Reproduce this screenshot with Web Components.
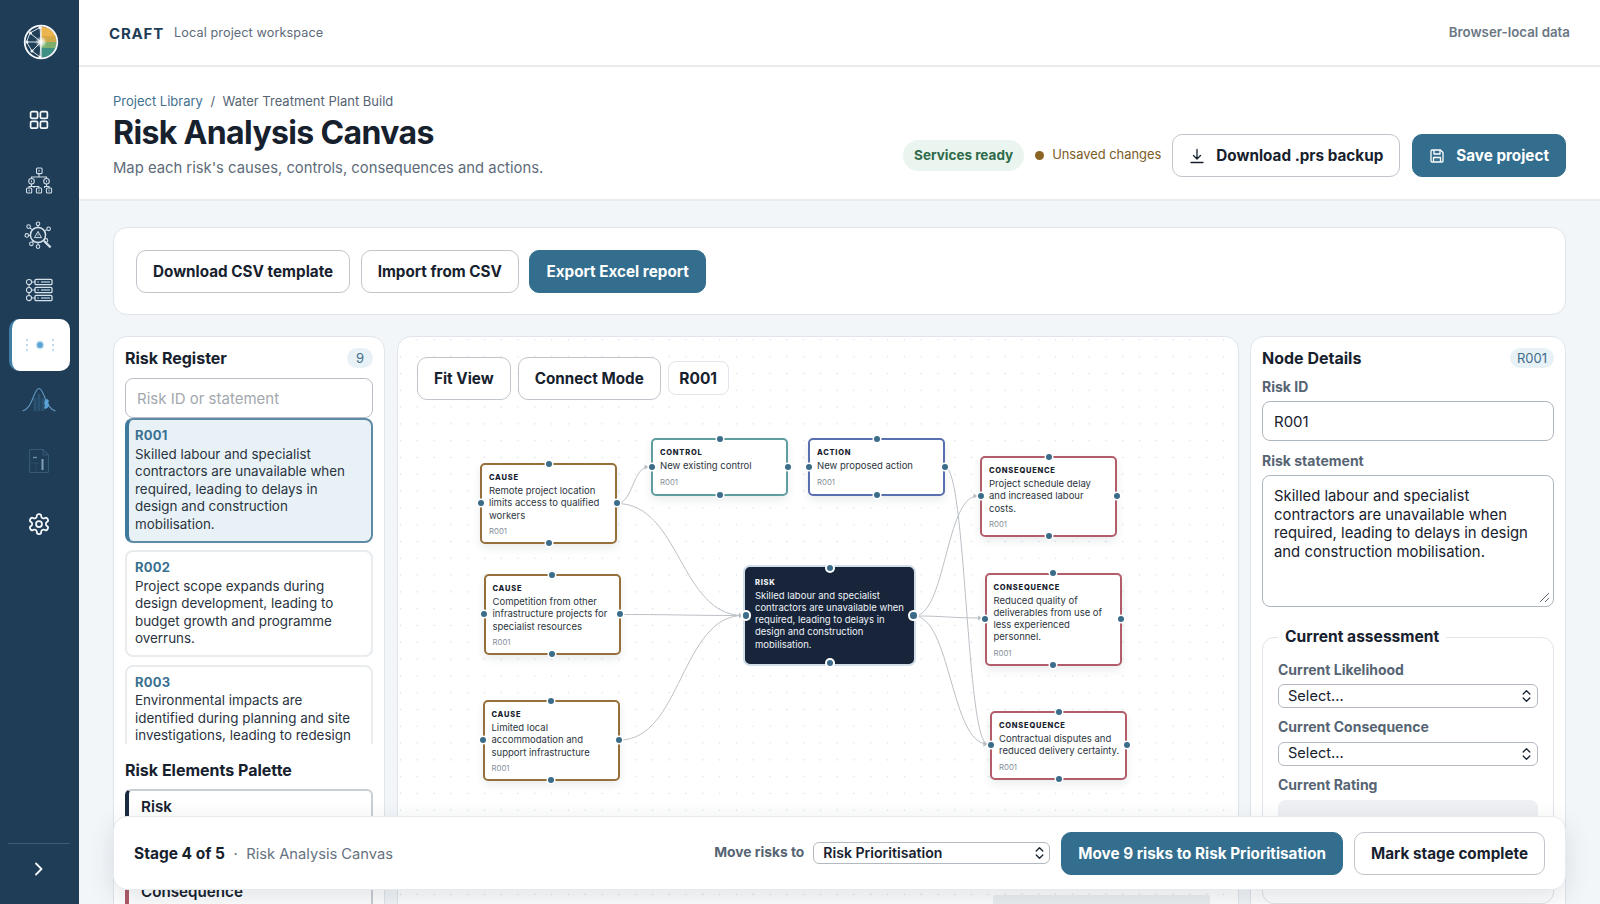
<!DOCTYPE html>
<html lang="en">
<head>
<meta charset="utf-8">
<title>Risk Analysis Canvas</title>
<style>
html,body{margin:0;padding:0;height:100%;overflow:hidden;background:#f3f6f9;font-family:Inter,"Liberation Sans",sans-serif;color:#17212e}
</style>
</head>
<body>
<app-shell>
  <side-nav slot="side">
    <nav-item mt="26">
      <svg width="20" height="20" viewBox="0 0 20 20" fill="none" stroke="#f4f8fb" stroke-width="1.7"><rect x="1.6" y="1.6" width="7" height="6.8" rx="1.4"/><rect x="11.4" y="1.6" width="7" height="6.8" rx="1.4"/><rect x="1.6" y="11.4" width="7" height="6.8" rx="1.4"/><rect x="11.4" y="11.4" width="7" height="6.8" rx="1.4"/></svg>
    </nav-item>
    <nav-item mt="9">
      <svg width="28" height="28" viewBox="0 0 28 28" fill="none" stroke="#d5e1ea" stroke-width="1.05"><rect x="11.5" y="1" width="5.6" height="5.6" rx="1"/><path d="M14 6.6V10M6.5 11.5V10H21.5V11.5M6.5 17v2.5M4 21v-1.5H9V21M14 19.5V21M9 19.5h5M21.5 17v2.5M19.5 21v-1.5H24V21"/><circle cx="6.5" cy="14.3" r="2.8"/><circle cx="21.5" cy="14.3" r="2.8"/><rect x="1.5" y="21" width="5.2" height="5" rx="1"/><rect x="11.4" y="21" width="5.2" height="5" rx="1"/><rect x="21.4" y="21" width="5.2" height="5" rx="1"/><path d="M14 2.7v2.2M6.5 13.3v2M21.5 13.3v2M4.1 22.5v2M14 22.5v2M24 22.5v2" stroke-width=".9"/></svg>
    </nav-item>
    <nav-item mt="3">
      <svg width="30" height="30" viewBox="0 0 30 30" fill="none" stroke="#d5e1ea" stroke-width="1.05"><circle cx="14" cy="14" r="7.6" stroke-width="1.5"/><path d="M14 10.4l3.5 6.2h-7z" stroke-width="1"/><path d="M14 12.6v2M14 15.5v.4" stroke-width=".8"/><circle cx="14" cy="2.8" r="1.8"/><circle cx="24.6" cy="7.8" r="1.8"/><circle cx="4.6" cy="5.6" r="1.8"/><circle cx="2.8" cy="14.4" r="1.8"/><circle cx="7.4" cy="22.8" r="1.8"/><circle cx="14" cy="25.6" r="1.8"/><circle cx="22" cy="19.4" r="1.8"/><path d="M14 4.6v1.8M22.9 8.6l-2.4 1.3M6 6.8l2.4 2M4.6 14.4H6.4M8.6 21.2l.8-1.4M14 23.8v-2.2"/><path d="M20 20l6.6 6.4" stroke-width="2.2"/></svg>
    </nav-item>
    <nav-item mt="2">
      <svg width="28" height="24" viewBox="0 0 28 24" fill="none" stroke="#d5e1ea" stroke-width="1.05"><circle cx="4" cy="4" r="2.6"/><circle cx="4" cy="12" r="2.6"/><circle cx="4" cy="20" r="2.6"/><path d="M4 6.6v2.8M4 14.6v2.8M6.6 4H10M6.6 12H10M6.6 20H10"/><rect x="10" y="1.4" width="17" height="5.2" rx="1.2" stroke-width="1.3"/><rect x="10" y="9.4" width="17" height="5.2" rx="1.2" stroke-width="1.3"/><rect x="10" y="17.4" width="17" height="5.2" rx="1.2" stroke-width="1.3"/><path d="M16 4h9M16 12h9M16 20h9" stroke="#7f97aa" stroke-width="2.2"/><path d="M12.6 4h.9M12.6 12h.9M12.6 20h.9" stroke-width="1.6"/></svg>
    </nav-item>
    <nav-item mt="3" active>
      <svg width="30" height="16" viewBox="0 0 30 16" fill="#a9cde4"><circle cx="2" cy="3" r="1"/><circle cx="2" cy="8" r="1"/><circle cx="2" cy="13" r="1"/><circle cx="28" cy="3" r="1"/><circle cx="28" cy="8" r="1"/><circle cx="28" cy="13" r="1"/><circle cx="15" cy="8" r="4.4" fill="#cfe4f2"/><circle cx="15" cy="8" r="2.9" fill="#5aa5d6"/></svg>
    </nav-item>
    <nav-item mt="3">
      <svg width="36" height="28" viewBox="0 0 36 28" fill="none"><path d="M14 12v13M18 8v17M22 12v13" stroke="#2a5371" stroke-width="3"/><path d="M1.500 25c6 -2 8 -7 10.500 -13c2 -5 3.500 -9.500 6 -9.500s4 4.500 6 9.500c2.500 6 4.500 11 10.500 13" stroke="#6299c1" stroke-width="1.100"/><path d="M24 14c3-2 5 1 3 3 2 1 1 5-3 6-1-1-1-2 0-3-1-2-1-4 0-6z" fill="#5ba3d6"/></svg>
    </nav-item>
    <nav-item mt="9">
      <svg width="22" height="26" viewBox="0 0 22 26" fill="none" stroke="#365a76" stroke-width="1.1"><path d="M1.500 2.500a1 1 0 0 1 1-1H15l5.500 5.500V23.500a1 1 0 0 1-1 1h-17a1 1 0 0 1-1-1z"/><path d="M15 1.500V7h5.500"/><path d="M5 9.500h4" stroke="#6b8ea8" stroke-width="1.4"/><path d="M14.500 11v11" stroke="#7ea1ba" stroke-width="2"/><path d="M1.500 15h10M8 15v9" stroke="#2e4f69" stroke-width=".8"/></svg>
    </nav-item>
    <nav-item mt="11">
      <svg width="24" height="24" viewBox="0 0 24 24" fill="none" stroke="#f4f8fb" stroke-width="1.75" stroke-linecap="round" stroke-linejoin="round"><path d="M12.220 2h-.44a2 2 0 0 0-2 2v.18a2 2 0 0 1-1 1.730l-.43.25a2 2 0 0 1-2 0l-.15-.08a2 2 0 0 0-2.730.73l-.22.38a2 2 0 0 0 .73 2.730l.15.1a2 2 0 0 1 1 1.720v.51a2 2 0 0 1-1 1.740l-.15.09a2 2 0 0 0-.73 2.730l.22.38a2 2 0 0 0 2.730.73l.15-.08a2 2 0 0 1 2 0l.43.25a2 2 0 0 1 1 1.730V20a2 2 0 0 0 2 2h.44a2 2 0 0 0 2-2v-.18a2 2 0 0 1 1-1.730l.43-.25a2 2 0 0 1 2 0l.15.08a2 2 0 0 0 2.730-.73l.22-.39a2 2 0 0 0-.73-2.730l-.15-.08a2 2 0 0 1-1-1.740v-.5a2 2 0 0 1 1-1.740l.15-.09a2 2 0 0 0 .73-2.730l-.22-.38a2 2 0 0 0-2.730-.73l-.15.08a2 2 0 0 1-2 0l-.43-.25a2 2 0 0 1-1-1.730V4a2 2 0 0 0-2-2z"/><circle cx="12" cy="12" r="3"/></svg>
    </nav-item>
  </side-nav>

  <app-header></app-header>
  <page-head></page-head>

  <main-area>
    <tool-card>
      <c-btn>Download CSV template</c-btn>
      <c-btn>Import from CSV</c-btn>
      <c-btn primary>Export Excel report</c-btn>
    </tool-card>
    <work-grid>
      <register-panel>
        <risk-card rid="R001" active>Skilled labour and specialist contractors are unavailable when required, leading to delays in design and construction mobilisation.</risk-card>
        <risk-card rid="R002">Project scope expands during design development, leading to budget growth and programme overruns.</risk-card>
        <risk-card rid="R003" style="min-height:110px">Environmental impacts are identified during planning and site investigations, leading to redesign</risk-card>
        <palette-item slot="palette" color="#1a2a40">Risk</palette-item>
        <palette-item slot="palette" color="#96703a"></palette-item>
        <palette-item slot="palette" color="#b05a66">Consequence</palette-item>
      </register-panel>
      <canvas-panel>
        <c-btn slot="tools">Fit View</c-btn>
        <c-btn slot="tools">Connect Mode</c-btn>
        <id-chip slot="tools">R001</id-chip>
        <flow-edges></flow-edges>
        <flow-node kind="cause" x="480" y="463" w="137">Remote project location limits access to qualified workers</flow-node>
        <flow-node kind="control" x="651" y="438" w="137">New existing control</flow-node>
        <flow-node kind="action" x="808" y="438" w="137">New proposed action</flow-node>
        <flow-node kind="cause" x="483.5" y="574" w="137">Competition from other infrastructure projects for specialist resources</flow-node>
        <flow-node kind="cause" x="482.5" y="700" w="137">Limited local accommodation and support infrastructure</flow-node>
        <flow-node kind="risk" x="745" y="567" w="169">Skilled labour and specialist contractors are unavailable when required, leading to delays in design and construction mobilisation.</flow-node>
        <flow-node kind="consequence" x="980" y="456" w="137">Project schedule delay and increased labour costs.</flow-node>
        <flow-node kind="consequence" x="984.5" y="572.500" w="137">Reduced quality of deliverables from use of less experienced personnel.</flow-node>
        <flow-node kind="consequence" x="990" y="711" w="137" pr="2">Contractual disputes and reduced delivery certainty.</flow-node>
        <mini-map></mini-map>
      </canvas-panel>
      <details-panel></details-panel>
    </work-grid>
    <stage-bar></stage-bar>
  </main-area>
</app-shell>

<script>
function def(name, css, html, extra) {
  customElements.define(name, class extends HTMLElement {
    constructor() {
      super();
      const r = this.attachShadow({ mode: 'open' });
      r.innerHTML = '<style>' + css + '</style>' + (typeof html === 'function' ? html(this) : html);
    }
    connectedCallback() { if (extra) extra(this); }
  });
}
const BTN = 'display:inline-flex;align-items:center;justify-content:center;box-sizing:border-box;height:43px;border-radius:10px;padding-top:1px;font:700 15.250px/1 Inter,"Liberation Sans",sans-serif;';

def('app-shell',
  `:host{display:grid;grid-template-columns:79px 1fr;grid-template-rows:67px 134px 1fr;height:904px;width:1600px;overflow:hidden}
   ::slotted([slot=side]){grid-row:1 / 4}`,
  `<slot name="side"></slot><slot></slot>`);

def('side-nav',
  `:host{display:flex;flex-direction:column;background:#1f3d57;height:904px;box-sizing:border-box}
   .logo{height:52px;margin-top:16px;display:flex;align-items:center;justify-content:center;padding-left:3px}
   .foot{margin-top:auto;margin-left:8px;margin-right:9px;height:61px;box-sizing:border-box;padding-bottom:11px;border-top:1px solid #3f5a72;display:flex;align-items:center;justify-content:center}`,
  `<div class="logo"><svg width="36" height="36" viewBox="0 0 36 36">
     <defs><clipPath id="c"><circle cx="18" cy="18" r="15.500"/></clipPath>
     <radialGradient id="g"><stop offset="0" stop-color="#fff"/><stop offset=".35" stop-color="#fff" stop-opacity=".75"/><stop offset="1" stop-color="#fff" stop-opacity="0"/></radialGradient></defs>
     <g clip-path="url(#c)">
       <rect x="0" y="0" width="18" height="36" fill="#203f59"/>
       <rect x="18" y="0" width="18" height="18" fill="#e5a53d"/>
       <rect x="18" y="4" width="18" height="8" fill="#eab44f"/>
       <rect x="18" y="13" width="18" height="5" fill="#cda94a"/>
       <rect x="18" y="18" width="18" height="18" fill="#3f9283"/>
       <rect x="18" y="18" width="18" height="6" fill="#7db06d"/>
       <path d="M18 18V2M18 18V34" stroke="#fff" stroke-width="1"/>
     </g>
     <g fill="none" stroke="#e6eef4" stroke-width=".95">
       <path d="M18 18L17 3.500L7 9L3.500 18L9 27L17 33L18 18L9 27M18 18L3.500 18M18 18L7 9"/>
     </g>
     <g fill="#f2f6f9"><circle cx="17" cy="3.500" r="1.500"/><circle cx="7.500" cy="9" r="1.500"/><circle cx="4" cy="18" r="1.500"/><circle cx="9" cy="27" r="1.500"/><circle cx="17" cy="33" r="1.500"/></g>
     <circle cx="18" cy="18" r="6" fill="url(#g)"/>
     <circle cx="18" cy="18" r="16.300" fill="none" stroke="#f7fafc" stroke-width="1.800"/>
   </svg></div>
   <slot></slot>
   <div class="foot"><svg width="14" height="16" viewBox="0 0 14 16" fill="none" stroke="#f4f8fb" stroke-width="1.800" stroke-linecap="round" stroke-linejoin="round"><path d="M4 2.500l5.500 5.500L4 13.500"/></svg></div>`);

def('nav-item',
  `:host{display:flex;align-items:center;justify-content:center;height:52px;width:61px;margin-left:9px;box-sizing:border-box;padding-right:1px;border-radius:10px}
   :host([active]){background:#fff;border-left:3px solid #3f7ca6;padding-right:3px}`,
  `<slot></slot>`,
  el => { el.style.marginTop = (el.getAttribute('mt') || 0) + 'px'; });

def('app-header',
  `:host{display:flex;align-items:center;padding:1px 30px 0 30px;background:#fff;border-bottom:2px solid #e8ecef;box-sizing:border-box;height:67px}
   .b{font:700 15px/1 Inter,sans-serif;letter-spacing:.055em;color:#1f3d57;margin-right:10px}
   .s{font:400 12.650px/1 Inter,sans-serif;letter-spacing:.008em;color:#5d6b79}
   .r{margin-left:auto;font:600 13.300px/1 Inter,sans-serif;color:#6b7784}`,
  `<span class="b">CRAFT</span><span class="s">Local project workspace</span><span class="r">Browser-local data</span>`);

def('page-head',
  `:host{display:flex;justify-content:space-between;align-items:flex-end;box-sizing:border-box;height:134px;background:#fff;border-bottom:2px solid #e8ecef;padding:0 34px 22px}
   .t{margin-bottom:-1.500px}
   .crumb{font:400 13px/16px Inter,sans-serif;color:#566473;margin-bottom:3.500px}
   .crumb a{color:#3f7190}
   .crumb i{font-style:normal;margin:0 7.500px}
   h1{margin:0;font:700 32px/40px Inter,sans-serif;letter-spacing:-.02em;color:#17212e}
   p{margin:4px 0 0;font:400 14.800px/22px Inter,sans-serif;color:#5d6b79}
   .acts{display:flex;align-items:center}
   .pill{font:700 13.500px/31px Inter,sans-serif;color:#2f6a4a;background:#e9f5ee;border-radius:16px;padding:0 11px;height:31px;margin-right:11px}
   .uns{display:flex;align-items:center;font:400 12.900px/1 Inter,sans-serif;color:#7b5d25;margin-right:11px}
   .uns b{width:9px;height:9px;border-radius:50%;background:#8a6423;margin-right:8px}
   svg{margin-left:0;margin-right:11px}`,
  `<div class="t"><div class="crumb"><a>Project Library</a><i>/</i>Water Treatment Plant Build</div><h1>Risk Analysis Canvas</h1><p>Map each risk's causes, controls, consequences and actions.</p></div>
   <div class="acts"><span class="pill">Services ready</span><span class="uns"><b></b>Unsaved changes</span>
   <c-btn style="margin-right:12px"><svg width="16" height="16" viewBox="0 0 16 16" fill="none" stroke="#17212e" stroke-width="1.300" stroke-linecap="round" stroke-linejoin="round"><path d="M8 1.500v9M4.500 7.500L8 11l3.500-3.500M2 14.500h12"/></svg>Download .prs backup</c-btn>
   <c-btn primary><svg width="16" height="16" viewBox="0 0 16 16" fill="none" stroke="#fff" stroke-width="1.300" stroke-linejoin="round"><path d="M2 3a1 1 0 0 1 1-1h8.500L14 4.500V13a1 1 0 0 1-1 1H3a1 1 0 0 1-1-1z"/><path d="M5 2v4h6V2M4.500 14V9.500h7V14"/></svg>Save project</c-btn></div>`);

def('c-btn',
  `:host{${BTN}padding-left:16px;padding-right:16px;background:#fff;border:1px solid #bfc5cb;color:#17212e;white-space:nowrap}
   :host([primary]){background:#336e8e;border-color:#336e8e;color:#fff}`,
  `<slot></slot>`);

def('main-area',
  `:host{display:block;position:relative;padding:26px 34px 0;overflow:hidden;min-height:0}`,
  `<slot></slot>`);

def('tool-card',
  `:host{display:flex;gap:10.500px;align-items:center;box-sizing:border-box;height:88px;padding:0 22px;background:#fff;border:1px solid #dfe5ea;border-radius:14px;margin-bottom:21px}`,
  `<slot></slot>`);

def('work-grid',
  `:host{display:grid;grid-template-columns:272px 1fr 315px;gap:12px;height:680px}`,
  `<slot></slot>`);

const PANEL = 'box-sizing:border-box;background:#fff;border:1px solid #dfe5ea;border-radius:14px;overflow:hidden;';

def('register-panel',
  `:host{display:block;${PANEL}padding:0 11px}
   .hd{display:flex;align-items:center;justify-content:space-between;height:41px;box-sizing:border-box}
   h2{margin:0;font:700 16px/1 Inter,sans-serif;color:#17212e}
   .n{font:400 13px/20px Inter,sans-serif;color:#3f6c8b;background:#e8f2f6;border-radius:10px;width:26px;height:20px;text-align:center}
   .q{box-sizing:border-box;height:40px;border:1px solid #b7bec6;border-radius:8px;padding:0 11px;font:400 15px/40px Inter,sans-serif;color:#a2a8ae}
   .list{display:flex;flex-direction:column;gap:7.500px;height:326px;overflow:hidden}
   h3{margin:16px 0 8.500px;font:700 16px/20px Inter,sans-serif;color:#17212e}
   .pal{display:flex;flex-direction:column;gap:6px}`,
  `<div class="hd"><h2>Risk Register</h2><span class="n">9</span></div>
   <div class="q">Risk ID or statement</div>
   <div class="list"><slot></slot></div>
   <h3>Risk Elements Palette</h3>
   <div class="pal"><slot name="palette"></slot></div>`);

def('risk-card',
  `:host{display:block;flex:none;box-sizing:border-box;border:2px solid #e8ecef;border-radius:8px;padding:6px 11px 7.500px 8px;font:400 13.400px/17.500px Inter,sans-serif;color:#2a3340;background:#fff}
   :host([active]){border:2px solid #5f8aa5;border-left:4px solid #3f7a9c;background:#e8f2f6;padding-left:6px}
   b{display:block;font:700 13px/18px Inter,sans-serif;letter-spacing:.02em;color:#3a7092;margin-bottom:1.500px}`,
  el => `<b>${el.getAttribute('rid')}</b><slot></slot>`);

def('palette-item',
  `:host{display:flex;align-items:center;box-sizing:border-box;height:36.500px;border:2px solid #c9ced4;border-left:4px solid var(--c);border-radius:6px;padding-left:12px;font:600 15.200px/1 Inter,sans-serif;color:#17212e;background:#fff}`,
  `<slot></slot>`,
  el => { el.style.setProperty('--c', el.getAttribute('color')); });

def('canvas-panel',
  `:host{display:block;position:relative;${PANEL}background-color:#fff;background-image:radial-gradient(circle,#dce1e6 .8px,transparent 1.05px);background-size:16.800px 16.800px;background-position:10.900px 11.300px}
   .tools{display:flex;align-items:center;gap:7px;padding:19.500px 0 0 19px}`,
  `<div class="tools"><slot name="tools"></slot></div><slot></slot>`);

def('id-chip',
  `:host{display:inline-flex;align-items:center;box-sizing:border-box;height:34px;padding:1px 10.500px 0;background:#fff;border:1px solid #dfe5ea;border-radius:8px;font:700 15.500px/1 Inter,sans-serif;color:#17212e}`,
  `<slot></slot>`);

/* Free canvas: the edges and nodes are placed by coordinates (page px minus the canvas origin). */
const OX = 398, OY = 337;
const EDGES = [
  [617,503.5,648.500,467],[617,503.5,743,615.5],[620.500,614.5,743,615.5],[619.500,740,743,615.5],
  [914,616,977.5,496],[914,616,982,618],[914,616,987.500,744],[945,467,987.500,744]
];
def('flow-edges',
  `:host{position:absolute;left:0;top:0;width:100%;height:100%;pointer-events:none}
   svg{position:absolute;left:0;top:0;width:100%;height:100%}`,
  () => {
    const d = EDGES.map(([a,b,c,e]) => {
      const x1=a-OX,y1=b-OY,x2=c-OX,y2=e-OY,m=(x1+x2)/2;
      return `<path d="M${x1} ${y1}C${m} ${y1} ${m} ${y2} ${x2} ${y2}" fill="none" stroke="#bcc1c7" stroke-width="1"/>`
       + `<path d="M${x2-4} ${y2-2.6}L${x2} ${y2}L${x2-4} ${y2+2.6}z" fill="#bcc1c7"/>`;
    }).join('');
    return `<svg>${d}</svg>`;
  });

const KIND = {
  cause:['#96703a','Cause'], control:['#5f9ea0','Control'], action:['#5a6fb0','Action'],
  consequence:['#b25d69','Consequence'], risk:['#17243a','Risk']
};
def('flow-node',
  `:host{position:absolute;display:block;box-sizing:border-box;min-height:57.500px;background:#fff;border:2px solid var(--c);border-radius:5px;padding:8px 5.800px 5.500px 7px;box-shadow:0 4px 9px rgba(25,40,60,.09);font:400 9.500px/12.250px Inter,sans-serif;color:#2c3540}
   :host([kind=risk]){color:#eef3f7;box-shadow:0 0 0 2px #d2dee8;background:#17243a;padding:8.500px 8px 11px}
   .l{display:block;font:800 7.500px/10px Inter,sans-serif;letter-spacing:.1em;text-transform:uppercase;color:#17212e;margin-bottom:2px}
   :host([kind=risk]) .l{color:#f3f6f9}
   .i{display:block;font:400 7.800px/10px Inter,sans-serif;color:#87909a;margin-top:4.500px}
   .h{position:absolute;width:6px;height:6px;border-radius:50%;background:#3b6c8a;box-shadow:0 0 0 1.500px #fff}
   :host([kind=risk]) .h{width:6.500px;height:6.500px;box-shadow:0 0 0 2px #fff}
   .t{top:-4.500px;left:calc(50% - 3px)} .b{bottom:-4.500px;left:calc(50% - 3px)}
   .ll{left:-4.500px;top:calc(50% - 3px)} .r{right:-4.500px;top:calc(50% - 3px)}`,
  el => {
    const k = el.getAttribute('kind');
    return `<span class="l">${KIND[k][1]}</span><slot></slot>${k==='risk'?'':'<span class="i">R001</span>'}<span class="h t"></span><span class="h b"></span><span class="h ll"></span><span class="h r"></span>`;
  },
  el => {
    const s = el.style;
    s.left = (el.getAttribute('x') - OX) + 'px';
    s.top = (el.getAttribute('y') - OY) + 'px';
    s.width = el.getAttribute('w') + 'px';
    if (el.hasAttribute('pr')) s.paddingRight = el.getAttribute('pr') + 'px';
    s.setProperty('--c', KIND[el.getAttribute('kind')][0]);
  });

def('mini-map',
  `:host{position:absolute;display:block;left:595px;top:558px;width:217px;height:80px;background:#eef0f2;border-radius:2px}`, ``);

def('c-select',
  `:host{display:flex;align-items:center;justify-content:space-between;box-sizing:border-box;height:24px;background:#fff;border:1px solid #b3b9c0;border-radius:6px;padding:0 6px 0 9px;font:400 14.600px/1 Inter,sans-serif;color:#17212e}
   :host([strong]){height:21.500px;font:600 14.100px/1 Inter,sans-serif;width:237px;padding:0 5px 0 9px}
   svg{flex:none}`,
  `<slot></slot><svg width="9" height="14" viewBox="0 0 9 14" fill="none" stroke="#17212e" stroke-width="1.300" stroke-linecap="round" stroke-linejoin="round"><path d="M1.200 5L4.500 1.700L7.800 5M1.200 9L4.500 12.300L7.800 9"/></svg>`);

def('details-panel',
  `:host{display:block;${PANEL}padding:0 11px;margin-left:-1px}
   .hd{display:flex;align-items:center;justify-content:space-between;height:41px;box-sizing:border-box}
   h2{margin:0;font:700 16px/1 Inter,sans-serif;color:#17212e}
   .n{font:400 13px/20px Inter,sans-serif;color:#3f6c8b;background:#e8f2f6;border-radius:10px;padding:0 7px;height:20px}
   label{display:block;font:700 14px/17px Inter,sans-serif;color:#566473;margin-bottom:6px}
   .in{box-sizing:border-box;height:40px;border:1px solid #aeb6be;border-radius:8px;padding:0 11px;font:400 15px/40px Inter,sans-serif;color:#17212e;margin-bottom:11px}
   .ta{position:relative;box-sizing:border-box;height:132px;border:1px solid #aeb6be;border-radius:8px;padding:11px 11px;font:400 14.860px/18.500px Inter,sans-serif;color:#17212e;margin-bottom:20px}
   .ta svg{position:absolute;right:3px;bottom:3px}
   fieldset{margin:0;padding:7px 15px 0;border:1px solid #dfe5ea;border-radius:12px;height:277px;box-sizing:border-box;min-width:0}
   legend{font:700 15.600px/20px Inter,sans-serif;color:#17212e;padding:0 7px}
   fieldset label{margin-top:0;margin-bottom:6.500px}
   fieldset label:first-of-type{margin-top:6.500px}
   c-select{margin-bottom:10.250px}
   .rate{height:60px;background:#eef0f3;border-radius:8px}`,
  `<div class="hd"><h2>Node Details</h2><span class="n">R001</span></div>
   <label>Risk ID</label><div class="in">R001</div>
   <label>Risk statement</label>
   <div class="ta">Skilled labour and specialist contractors are unavailable when required, leading to delays in design and construction mobilisation.<svg width="11" height="11" viewBox="0 0 11 11" fill="none" stroke="#5f6770" stroke-width="1"><path d="M1 10L10 1M6 10L10 6"/></svg></div>
   <fieldset><legend>Current assessment</legend>
     <label>Current Likelihood</label><c-select>Select...</c-select>
     <label>Current Consequence</label><c-select>Select...</c-select>
     <label>Current Rating</label><div class="rate"></div>
   </fieldset>`);

def('stage-bar',
  `:host{position:absolute;left:34px;right:34px;bottom:14px;height:74px;box-sizing:border-box;display:flex;align-items:center;background:#fff;border:1px solid #e6eaee;border-radius:14px;box-shadow:0 8px 26px rgba(25,45,65,.13);padding:0 20px}
   b{font:700 15.500px/1 Inter,sans-serif;color:#17212e} .dot{margin:0 8.500px;color:#66727f;font:400 14.700px/1 Inter,sans-serif} .nm{color:#66727f;font:400 14.700px/1 Inter,sans-serif}
   .right{margin-left:auto;display:flex;align-items:center;gap:11px}
   .lab{font:700 13.800px/1 Inter,sans-serif;color:#566473;margin-right:-2px}`,
  `<span><b>Stage 4 of 5</b><span class="dot">·</span><span class="nm">Risk Analysis Canvas</span></span>
   <div class="right"><span class="lab">Move risks to</span><c-select strong>Risk Prioritisation</c-select>
   <c-btn primary>Move 9 risks to Risk Prioritisation</c-btn><c-btn>Mark stage complete</c-btn></div>`);
</script>
</body>
</html>
